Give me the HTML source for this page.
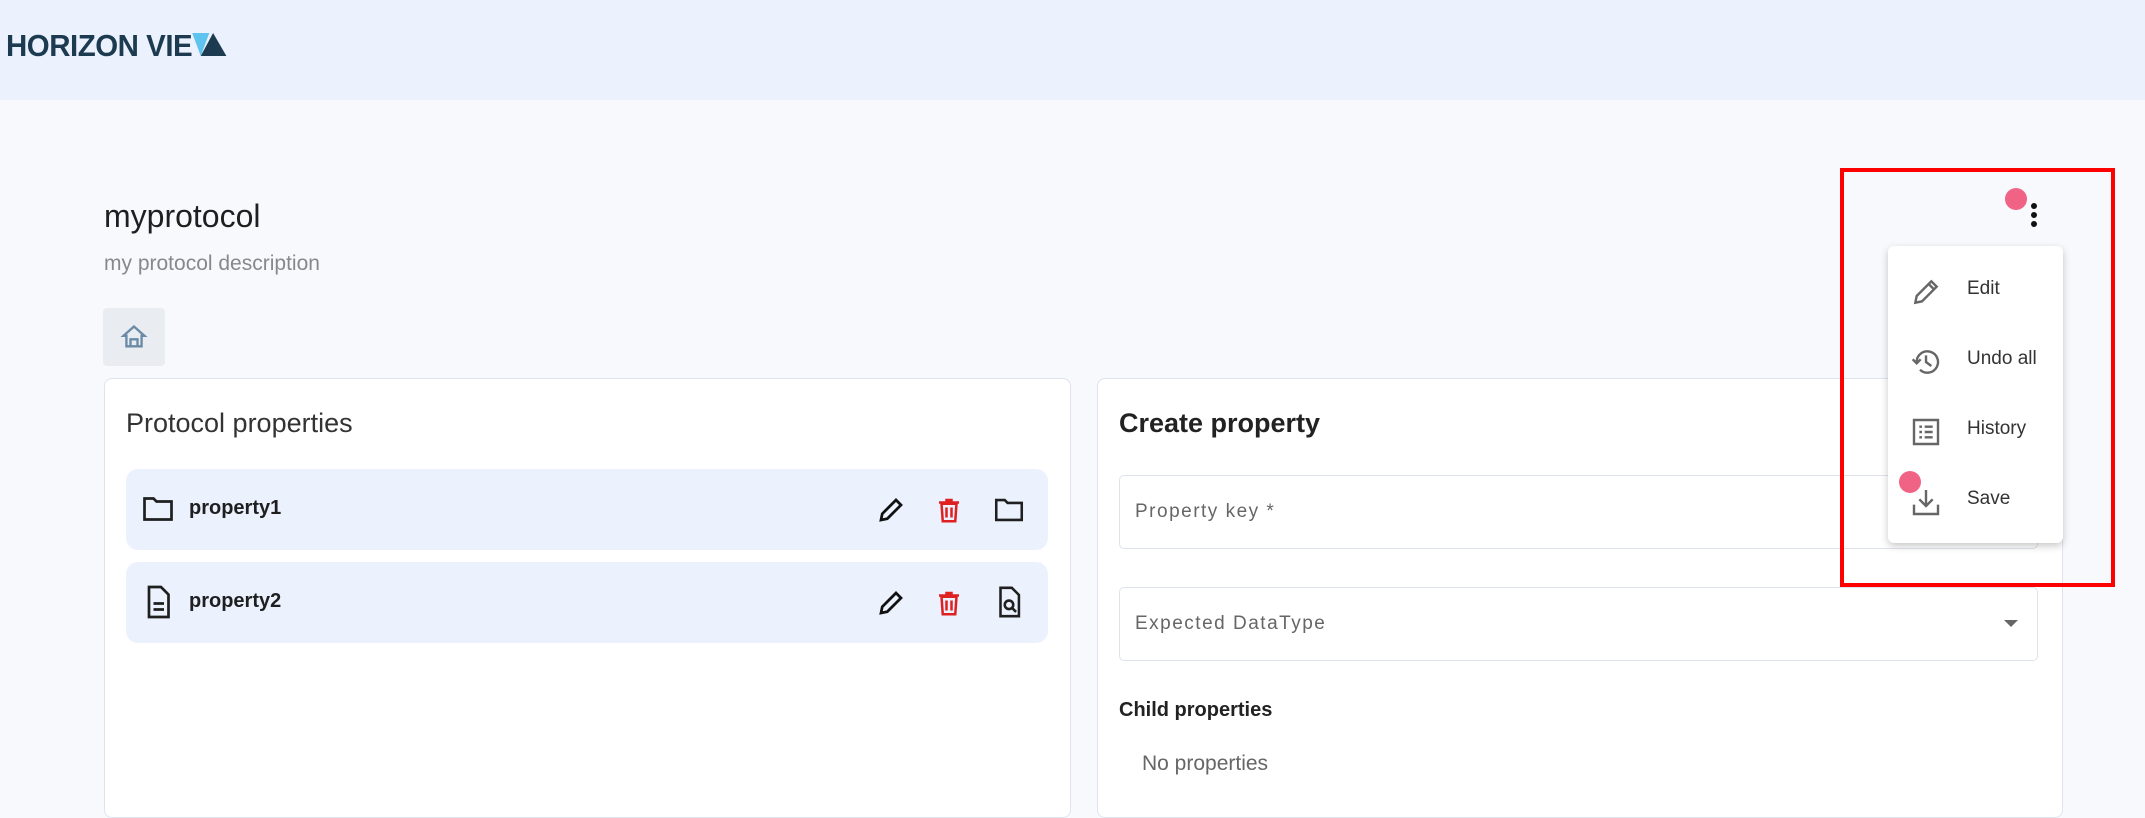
<!DOCTYPE html>
<html><head><meta charset="utf-8"><style>
*{box-sizing:border-box;margin:0;padding:0}
body{width:2145px;height:807px;overflow:hidden;background:#f7f9fd;font-family:"Liberation Sans",sans-serif;position:relative;color:#1f1f1f}
.abs{position:absolute}
.hdr{left:0;top:0;width:2145px;height:100px;background:#ebf2fe}
.logo{left:6px;top:28px;font-size:31px;font-weight:bold;color:#1c3a50;letter-spacing:-0.5px;transform:scaleX(0.95);transform-origin:left}
.card{background:#fff;border:1.5px solid #dfe3ee;border-radius:8px}
.row{left:126px;width:922px;height:81px;background:#ebf2fe;border-radius:12px}
.rt{font-size:20px;font-weight:bold;position:absolute;left:63px;top:28px}
.inp{left:1119px;width:919px;height:74px;border:1.5px solid #dfe3ea;border-radius:5px;background:#fff}
.inp span{position:absolute;left:15px;top:25px;font-size:19px;color:#666;letter-spacing:1.5px}
.menu{left:1888px;top:246px;width:175px;height:297px;background:#fff;border-radius:6px;box-shadow:0 3px 8px rgba(0,0,0,.22)}
.mi{position:absolute;left:79px;font-size:19px;color:#333}
.dot{width:22px;height:22px;border-radius:50%;background:#f06385}
</style></head><body>
<div class="abs hdr"></div>
<div class="abs logo">HORIZON VIE<svg width="44" height="26" viewBox="0 0 44 26" style="vertical-align:-2px"><polygon points="0,1 18,1 9,24" fill="#5ec3ef"/><polygon points="22,1 9,24 36,24" fill="#1c3a50"/></svg></div>
<div class="abs" style="left:104px;top:198px;font-size:32px">myprotocol</div>
<div class="abs" style="left:104px;top:252px;font-size:21px;color:#888">my protocol description</div>
<div class="abs" style="left:103px;top:308px;width:62px;height:58px;background:#e9ecf1;border-radius:4px"></div>
<svg class="abs" style="left:120px;top:323px" width="28" height="28" viewBox="0 0 24 24"><path d="M12 3L3 11h2.5v9h13v-9H21z M9 20v-6h6v6" fill="none" stroke="#6a8aa6" stroke-width="2"/></svg>
<div class="abs card" style="left:104px;top:378px;width:967px;height:440px"></div>
<div class="abs card" style="left:1097px;top:378px;width:966px;height:440px"></div>
<div class="abs" style="left:126px;top:408px;font-size:27px;color:#333">Protocol properties</div>
<div class="abs row" style="top:469px"><svg class="abs" style="left:14px;top:22px" width="36" height="36" viewBox="0 0 24 24"><path d="M3 5h6l2 2h10v12H3z" fill="none" stroke="#1f1f1f" stroke-width="1.8"/></svg><div class="rt">property1</div>
<svg class="abs" style="left:750px;top:26px" width="30" height="30" viewBox="0 0 24 24"><path d="M4 20l1-5L16 4l4 4L9 19z" fill="none" stroke="#111" stroke-width="2.2"/></svg>
<svg class="abs" style="left:808px;top:25px" width="30" height="32" viewBox="0 0 24 24"><path d="M6 7h12l-1 14H7z M4 6h16 M9 4h6 M10 10v8 M14 10v8" fill="none" stroke="#e02020" stroke-width="2"/></svg>
<svg class="abs" style="left:866px;top:24px" width="34" height="34" viewBox="0 0 24 24"><path d="M3 5h6l2 2h10v12H3z" fill="none" stroke="#1f1f1f" stroke-width="1.8"/></svg></div>
<div class="abs row" style="top:562px"><svg class="abs" style="left:14px;top:20px" width="36" height="40" viewBox="0 0 24 24"><path d="M6 2h8l5 5v15H6z M9 13h7 M9 17h7" fill="none" stroke="#1f1f1f" stroke-width="1.8"/></svg><div class="rt">property2</div>
<svg class="abs" style="left:750px;top:26px" width="30" height="30" viewBox="0 0 24 24"><path d="M4 20l1-5L16 4l4 4L9 19z" fill="none" stroke="#111" stroke-width="2.2"/></svg>
<svg class="abs" style="left:808px;top:25px" width="30" height="32" viewBox="0 0 24 24"><path d="M6 7h12l-1 14H7z M4 6h16 M9 4h6 M10 10v8 M14 10v8" fill="none" stroke="#e02020" stroke-width="2"/></svg>
<svg class="abs" style="left:866px;top:22px" width="34" height="36" viewBox="0 0 24 24"><path d="M6 2h8l5 5v15H6z" fill="none" stroke="#1f1f1f" stroke-width="1.8"/><circle cx="12" cy="14" r="3" fill="none" stroke="#1f1f1f" stroke-width="1.8"/><path d="M14 16l3 3" stroke="#1f1f1f" stroke-width="1.8"/></svg></div>
<div class="abs" style="left:1119px;top:408px;font-size:27px;font-weight:bold;color:#222">Create property</div>
<div class="abs inp" style="top:475px"><span>Property key *</span></div>
<div class="abs inp" style="top:587px"><span>Expected DataType</span><svg class="abs" style="left:884px;top:32px" width="14" height="8"><polygon points="0,0 14,0 7,7" fill="#666"/></svg></div>
<div class="abs" style="left:1119px;top:699px;font-size:20px;font-weight:bold;color:#222">Child properties</div>
<div class="abs" style="left:1142px;top:752px;font-size:21px;color:#666">No properties</div>
<div class="abs" style="left:2031px;top:203px;width:6px;height:6px;border-radius:50%;background:#111;box-shadow:0 9px 0 #111,0 18px 0 #111"></div>
<div class="abs dot" style="left:2005px;top:188px"></div>
<div class="abs menu">
<svg class="abs" style="left:22px;top:30px" width="32" height="32" viewBox="0 0 24 24"><path d="M4 20l1-5L16 4l4 4L9 19z M14 6l4 4" fill="none" stroke="#666" stroke-width="1.8"/></svg><div class="mi" style="top:32px">Edit</div>
<svg class="abs" style="left:22px;top:100px" width="32" height="32" viewBox="0 0 24 24"><path d="M5 12a8 8 0 1 1 2.5 5.8 M2 10l3 3 3-3 M12 7v5l4 3" fill="none" stroke="#666" stroke-width="1.8"/></svg><div class="mi" style="top:102px">Undo all</div>
<svg class="abs" style="left:22px;top:170px" width="32" height="32" viewBox="0 0 24 24"><path d="M3 3h18v18H3z M7 8h2 M11 8h6 M7 12h2 M11 12h6 M7 16h2 M11 16h6" fill="none" stroke="#666" stroke-width="1.8"/></svg><div class="mi" style="top:172px">History</div>
<svg class="abs" style="left:22px;top:240px" width="32" height="32" viewBox="0 0 24 24"><path d="M3 14v7h18v-7 M12 3v12 M7 10l5 5 5-5" fill="none" stroke="#666" stroke-width="1.8"/></svg><div class="mi" style="top:242px">Save</div>
</div>
<div class="abs dot" style="left:1899px;top:471px"></div>
<div class="abs" style="left:1840px;top:168px;width:275px;height:419px;border:4px solid #f00"></div>
</body></html>
